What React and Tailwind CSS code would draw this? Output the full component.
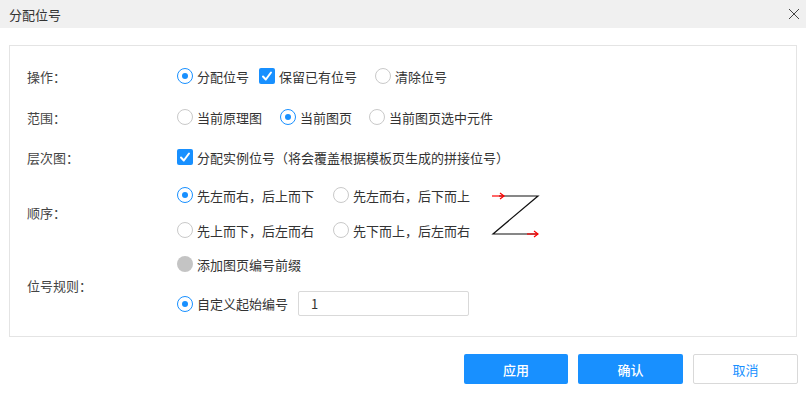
import React, { useState } from 'react';

const Radio = ({ checked, disabled, onClick }) => {
  if (disabled) {
    return <span className="inline-block w-[16px] h-[16px] rounded-full bg-[#c4c4c4] shrink-0" />;
  }
  return (
    <span
      onClick={onClick}
      className={
        checked
          ? 'inline-flex items-center justify-center w-[16px] h-[16px] rounded-full border border-[#1890ff] bg-white shrink-0 cursor-pointer'
          : 'inline-flex items-center justify-center w-[16px] h-[16px] rounded-full border border-[#c9c9c9] bg-white shrink-0 cursor-pointer'
      }
    >
      {checked && <span className="block w-[6px] h-[6px] rounded-full bg-[#1890ff]" />}
    </span>
  );
};

const Checkbox = ({ checked, onClick }) => (
  <span
    onClick={onClick}
    className={
      checked
        ? 'inline-flex items-center justify-center w-[16px] h-[16px] rounded-[2px] bg-[#1890ff] shrink-0 cursor-pointer'
        : 'inline-flex items-center justify-center w-[16px] h-[16px] rounded-[2px] border border-[#c9c9c9] bg-white shrink-0 cursor-pointer'
    }
  >
    {checked && (
      <svg width="12" height="12" viewBox="0 0 12 12">
        <path d="M2 6.5 L4.8 9.5 L10 2.5" fill="none" stroke="white" strokeWidth="2" strokeLinecap="round" strokeLinejoin="round" />
      </svg>
    )}
  </span>
);

const Option = ({ children, className = '', ...props }) => (
  <label className={'flex items-center gap-[4px] ' + className}>
    {props.type === 'checkbox' ? <Checkbox {...props} /> : <Radio {...props} />}
    <span className="whitespace-nowrap">{children}</span>
  </label>
);

// Z-shaped scan order sketch
const OrderDiagram = () => (
  <svg width="60" height="50" viewBox="0 0 60 50" className="ml-[16px]">
    <path d="M13 8 H52 L7 46 H52" fill="none" stroke="#111" strokeWidth="1.2" />
    <path d="M6 8 H18" stroke="#f00" strokeWidth="1.2" />
    <path d="M14 5 L18 8 L14 11" fill="none" stroke="#f00" strokeWidth="1.2" />
    <path d="M41 46 H52" stroke="#f00" strokeWidth="1.2" />
    <path d="M48 43 L52 46 L48 49" fill="none" stroke="#f00" strokeWidth="1.2" />
  </svg>
);

const App = () => {
  const [op, setOp] = useState('assign');
  const [keep, setKeep] = useState(true);
  const [scope, setScope] = useState('page');
  const [instance, setInstance] = useState(true);
  const [order, setOrder] = useState(0);
  const [start, setStart] = useState('1');

  return (
    <div className="w-[806px] h-[393px] bg-white text-[13px] text-[#333] font-['Noto_Sans_CJK_SC','Noto_Sans',sans-serif] leading-none select-none">
      <div className="h-[28px] bg-[#f0f0f0] flex items-center justify-between pl-[9px] pr-[4px]">
        <span className="text-[13px] text-[#333]">分配位号</span>
        <svg width="12" height="12" viewBox="0 0 12 12" className="mr-[2px]">
          <path d="M1 1 L11 11 M11 1 L1 11" stroke="#444" strokeWidth="1" />
        </svg>
      </div>

      <div className="mx-[9px] mt-[17px] h-[292px] border border-[#e4e4e4] pt-[20px] pl-[17px] flex flex-col">
        <div className="flex items-center h-[20px]">
          <div className="w-[150px] text-[#444]">操作：</div>
          <Option checked={op === 'assign'} onClick={() => setOp('assign')} className="mr-[10px]">分配位号</Option>
          <Option type="checkbox" checked={keep} onClick={() => setKeep(!keep)} className="mr-[18px]">保留已有位号</Option>
          <Option checked={op === 'clear'} onClick={() => setOp('clear')}>清除位号</Option>
        </div>

        <div className="flex items-center h-[20px] mt-[21px]">
          <div className="w-[150px] text-[#444]">范围：</div>
          <Option checked={scope === 'sch'} onClick={() => setScope('sch')} className="mr-[18px]">当前原理图</Option>
          <Option checked={scope === 'page'} onClick={() => setScope('page')} className="mr-[17px]">当前图页</Option>
          <Option checked={scope === 'sel'} onClick={() => setScope('sel')}>当前图页选中元件</Option>
        </div>

        <div className="flex items-center h-[20px] mt-[20px]">
          <div className="w-[150px] text-[#444]">层次图：</div>
          <Option type="checkbox" checked={instance} onClick={() => setInstance(!instance)}>
            分配实例位号（将会覆盖根据模板页生成的拼接位号）
          </Option>
        </div>

        <div className="flex items-center mt-[18px]">
          <div className="w-[150px] text-[#444]">顺序：</div>
          <div className="grid grid-cols-[156px_auto] gap-y-[15px]">
            <Option checked={order === 0} onClick={() => setOrder(0)} className="h-[20px]">先左而右，后上而下</Option>
            <Option checked={order === 1} onClick={() => setOrder(1)} className="h-[20px]">先左而右，后下而上</Option>
            <Option checked={order === 2} onClick={() => setOrder(2)} className="h-[20px]">先上而下，后左而右</Option>
            <Option checked={order === 3} onClick={() => setOrder(3)} className="h-[20px]">先下而上，后左而右</Option>
          </div>
          <OrderDiagram />
        </div>

        <div className="flex items-center mt-[14px]">
          <div className="w-[150px] text-[#444]">位号规则：</div>
          <div className="flex flex-col gap-[17px]">
            <Option disabled className="h-[20px]">添加图页编号前缀</Option>
            <div className="flex items-center">
              <Option checked onClick={() => {}} className="mr-[10px]">自定义起始编号</Option>
              <input
                value={start}
                onChange={(e) => setStart(e.target.value)}
                className="w-[171px] h-[25px] border border-[#d9d9d9] rounded-[2px] px-[12px] text-[13px] text-[#333] outline-none"
              />
            </div>
          </div>
        </div>
      </div>

      <div className="flex justify-end gap-[10px] mt-[17px] pr-[8px]">
        <button className="w-[104px] h-[30px] rounded-[2px] bg-[#1890ff] text-white text-[13px] font-medium">应用</button>
        <button className="w-[105px] h-[30px] rounded-[2px] bg-[#1890ff] text-white text-[13px] font-medium">确认</button>
        <button className="w-[105px] h-[30px] rounded-[2px] bg-white border border-[#d9d9d9] text-[#1890ff] text-[13px]">取消</button>
      </div>
    </div>
  );
};

export default App;
